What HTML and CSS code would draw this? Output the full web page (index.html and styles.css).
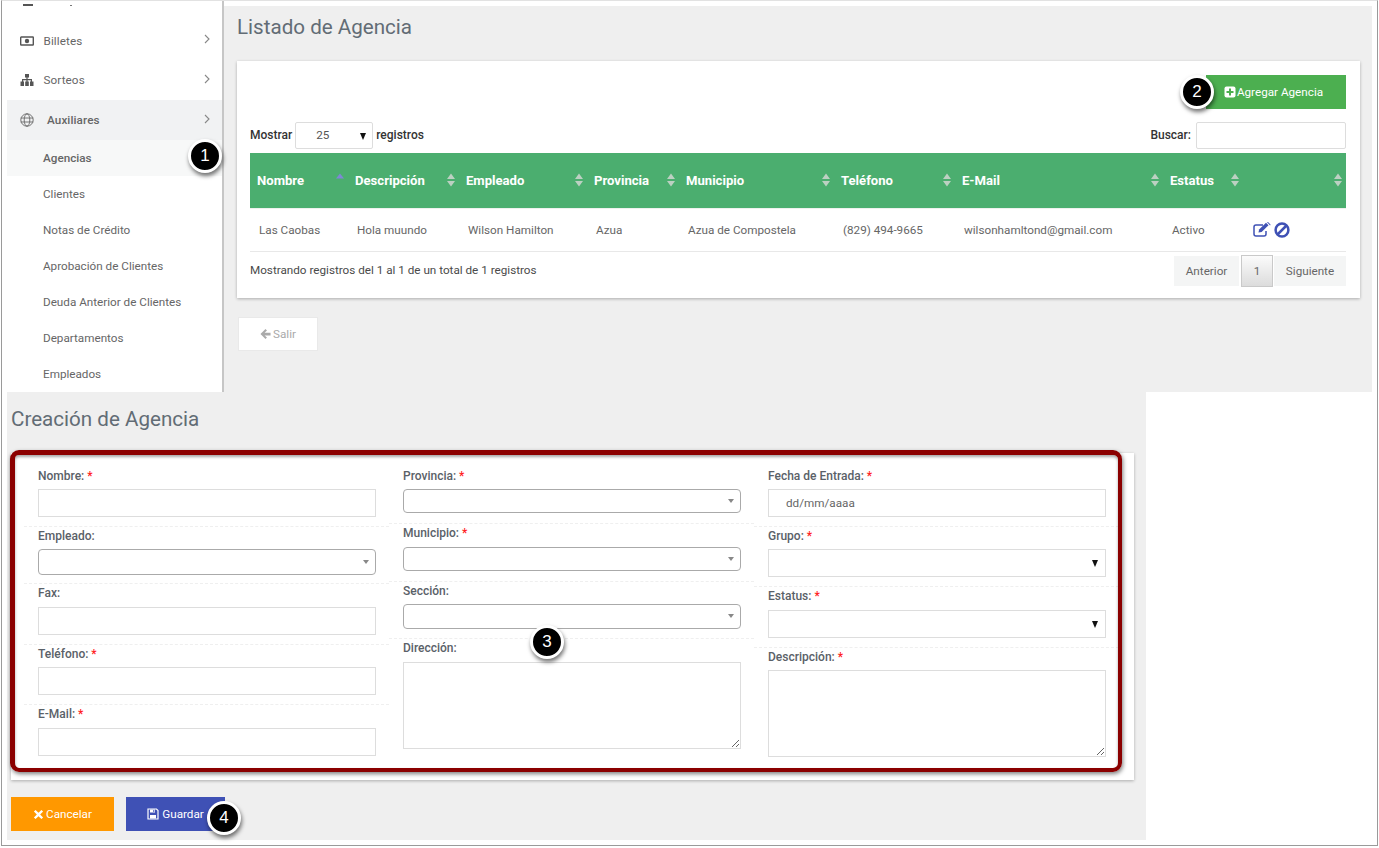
FILE: index.html
```html
<!DOCTYPE html>
<html lang="es">
<head>
<meta charset="utf-8">
<title>Agencias</title>
<link rel="stylesheet" href="styles.css">
</head>
<body>
<div class="window">
  <div class="upper">
    <aside class="sidebar">
      <div class="nav-clip"><i class="clip-a"></i><i class="clip-b"></i></div>
      <a class="nav-item">
        <svg class="nav-icon" viewBox="0 0 14 10"><rect x="0.7" y="1" width="12.6" height="8" rx="0.5" fill="none" stroke="#555" stroke-width="1.4"/><rect x="2.5" y="2.5" width="9" height="5" fill="#fff"/><circle cx="7" cy="5" r="2.2" fill="#555"/></svg>
        <span class="nav-label">Billetes</span>
        <svg class="chev" viewBox="0 0 6 10"><path d="M1 1l4 4-4 4" fill="none" stroke="#888" stroke-width="1.1"/></svg>
      </a>
      <a class="nav-item">
        <svg class="nav-icon" viewBox="0 0 14 12"><path d="M5 0h4v3.500H7.600V5H12v2.500h1.500V12h-3.500V7.500h.8V6.200H7.600V7.500H8.800V12H5.200V7.500h1.200V6.200H3.200v1.300H4V12H.5V7.500H2V5h4.400V3.500H5z" fill="#555"/></svg>
        <span class="nav-label">Sorteos</span>
        <svg class="chev" viewBox="0 0 6 10"><path d="M1 1l4 4-4 4" fill="none" stroke="#888" stroke-width="1.1"/></svg>
      </a>
      <a class="nav-item nav-open">
        <svg class="nav-globe" viewBox="0 0 14 14"><g fill="none" stroke="#666" stroke-width="0.9"><circle cx="7" cy="7" r="6.2"/><ellipse cx="7" cy="7" rx="2.8" ry="6.2"/><path d="M.8 5h12.400M.8 9h12.400"/></g></svg>
        <span class="nav-label">Auxiliares</span>
        <svg class="chev" viewBox="0 0 6 10"><path d="M1 1l4 4-4 4" fill="none" stroke="#888" stroke-width="1.1"/></svg>
      </a>
      <a class="sub-item sub-active">Agencias</a>
      <a class="sub-item">Clientes</a>
      <a class="sub-item">Notas de Crédito</a>
      <a class="sub-item">Aprobación de Clientes</a>
      <a class="sub-item">Deuda Anterior de Clientes</a>
      <a class="sub-item">Departamentos</a>
      <a class="sub-item">Empleados</a>
    </aside>
    <main class="main">
      <h1 class="title">Listado de Agencia</h1>
      <section class="list-card">
        <div class="add-row">
          <button class="btn btn-add">
            <svg class="btn-icon" viewBox="0 0 12 12"><rect width="11" height="11" x="0.500" y="0.500" rx="2" fill="#fff"/><path d="M6 2.500v7M2.500 6h7" stroke="#4caf50" stroke-width="2"/></svg>Agregar Agencia
          </button>
        </div>
        <div class="controls">
          <div class="show">
            <b>Mostrar</b>
            <div class="len-select"><span>25</span><i class="tri-black"></i></div>
            <b>registros</b>
          </div>
          <div class="search"><b>Buscar:</b><input class="search-input" type="text" aria-label="Buscar"></div>
        </div>
        <table class="grid">
          <colgroup>
            <col class="c1"><col class="c2"><col class="c3"><col class="c4"><col class="c5"><col class="c6"><col class="c7"><col class="c8"><col class="c9">
          </colgroup>
          <thead>
            <tr>
              <th><div class="th"><span>Nombre</span><svg class="sort" viewBox="0 0 8 16"><path d="M4 1.500l4 5H0z" fill="#7f87d6"/></svg></div></th>
              <th><div class="th"><span>Descripción</span><svg class="sort" viewBox="0 0 8 16"><path d="M4 1.500l4 5.500H0zM4 14.500L8 9H0z" fill="#bcd0c2"/></svg></div></th>
              <th><div class="th"><span>Empleado</span><svg class="sort" viewBox="0 0 8 16"><path d="M4 1.500l4 5.500H0zM4 14.500L8 9H0z" fill="#bcd0c2"/></svg></div></th>
              <th><div class="th"><span>Provincia</span><svg class="sort" viewBox="0 0 8 16"><path d="M4 1.500l4 5.500H0zM4 14.500L8 9H0z" fill="#bcd0c2"/></svg></div></th>
              <th><div class="th"><span>Municipio</span><svg class="sort" viewBox="0 0 8 16"><path d="M4 1.500l4 5.500H0zM4 14.500L8 9H0z" fill="#bcd0c2"/></svg></div></th>
              <th><div class="th"><span>Teléfono</span><svg class="sort" viewBox="0 0 8 16"><path d="M4 1.500l4 5.500H0zM4 14.500L8 9H0z" fill="#bcd0c2"/></svg></div></th>
              <th><div class="th"><span>E-Mail</span><svg class="sort" viewBox="0 0 8 16"><path d="M4 1.500l4 5.500H0zM4 14.500L8 9H0z" fill="#bcd0c2"/></svg></div></th>
              <th><div class="th"><span>Estatus</span><svg class="sort" viewBox="0 0 8 16"><path d="M4 1.500l4 5.500H0zM4 14.500L8 9H0z" fill="#bcd0c2"/></svg></div></th>
              <th><div class="th"><span></span><svg class="sort" viewBox="0 0 8 16"><path d="M4 1.500l4 5.500H0zM4 14.500L8 9H0z" fill="#bcd0c2"/></svg></div></th>
            </tr>
          </thead>
          <tbody>
            <tr>
              <td>Las Caobas</td>
              <td>Hola muundo</td>
              <td>Wilson Hamilton</td>
              <td>Azua</td>
              <td>Azua de Compostela</td>
              <td>(829) 494-9665</td>
              <td>wilsonhamltond@gmail.com</td>
              <td>Activo</td>
              <td class="actions"><svg class="act-edit" viewBox="0 0 18 15"><path d="M13 9v3a2 2 0 0 1-2 2H3a2 2 0 0 1-2-2V5a2 2 0 0 1 2-2h7" fill="none" stroke="#3f51b5" stroke-width="1.500"/><path d="M5.500 10.500l.6-3L13 .8l2.500 2.500L8.600 10z" fill="#3f51b5"/><path d="M14 .2l1-.2 2.500 2.400-.4 1.100z" fill="#3f51b5"/></svg><svg class="act-ban" viewBox="0 0 16 16"><circle cx="8" cy="8" r="6.400" fill="none" stroke="#3f51b5" stroke-width="2.500"/><path d="M3.500 12.500l9-9" stroke="#3f51b5" stroke-width="2.500"/></svg></td>
            </tr>
          </tbody>
        </table>
        <div class="foot">
          <span class="info">Mostrando registros del 1 al 1 de un total de 1 registros</span>
          <div class="pager">
            <a class="page page-prev">Anterior</a>
            <a class="page page-cur">1</a>
            <a class="page page-next">Siguiente</a>
          </div>
        </div>
      </section>
      <button class="btn btn-exit">
        <svg class="btn-icon-exit" viewBox="0 0 12 12"><path d="M6 .5L.5 6 6 11.500l1.600-1.600L5 7.500h6.500v-3H5l2.600-2.400z" fill="#aaa"/></svg>Salir
      </button>
    </main>
  </div>

  <section class="lower">
    <h2 class="title title-low">Creación de Agencia</h2>
    <div class="form-card">
      <div class="form-col">
        <div class="field"><label>Nombre: <em>*</em></label><input class="ctl" type="text" aria-label="Nombre"></div>
        <div class="field field-s"><label>Empleado:</label><div class="combo combo-a"><i class="tri-gray"></i></div></div>
        <div class="field"><label>Fax:</label><input class="ctl" type="text" aria-label="Fax"></div>
        <div class="field"><label>Teléfono: <em>*</em></label><input class="ctl" type="text" aria-label="Teléfono"></div>
        <div class="field field-end"><label>E-Mail: <em>*</em></label><input class="ctl" type="text" aria-label="E-Mail"></div>
      </div>
      <div class="form-col">
        <div class="field field-c"><label>Provincia: <em>*</em></label><div class="combo"><i class="tri-gray"></i></div></div>
        <div class="field field-c"><label>Municipio: <em>*</em></label><div class="combo"><i class="tri-gray"></i></div></div>
        <div class="field field-c"><label>Sección:</label><div class="combo"><i class="tri-gray"></i></div></div>
        <div class="field field-end"><label>Dirección:</label><textarea class="ctl area" aria-label="Dirección"></textarea></div>
      </div>
      <div class="form-col">
        <div class="field"><label>Fecha de Entrada: <em>*</em></label><input class="ctl ctl-date" type="text" value="dd/mm/aaaa" aria-label="Fecha de Entrada"></div>
        <div class="field"><label>Grupo: <em>*</em></label><div class="plain-select"><i class="tri-black"></i></div></div>
        <div class="field"><label>Estatus: <em>*</em></label><div class="plain-select"><i class="tri-black"></i></div></div>
        <div class="field field-end"><label>Descripción: <em>*</em></label><textarea class="ctl area" aria-label="Descripción"></textarea></div>
      </div>
      <div class="red-box"></div>
    </div>
    <div class="form-actions">
      <button class="btn btn-cancel">
        <svg class="btn-icon-x" viewBox="0 0 12 12"><path d="M2.800 1L6 4.200 9.200 1 11 2.800 7.800 6 11 9.200 9.200 11 6 7.800 2.800 11 1 9.200 4.200 6 1 2.800z" fill="#fff"/></svg>Cancelar
      </button>
      <button class="btn btn-save">
        <svg class="btn-icon-s" viewBox="0 0 12 12"><path d="M1 1h8.500L11 2.500V11H1z" fill="none" stroke="#fff" stroke-width="1.200"/><path d="M3 1.500h5v3H3zM3 7h6v3.500H3z" fill="#fff"/><path d="M6.300 2h1v2h-1z" fill="#3f51b5"/></svg>Guardar
      </button>
    </div>
  </section>

  <span class="badge b1">1</span>
  <span class="badge b2">2</span>
  <span class="badge b3">3</span>
  <span class="badge b4">4</span>
</div>
</body>
</html>
```

FILE: styles.css
```css
* { box-sizing: border-box; }
html, body { margin: 0; padding: 0; background: #fff; }
body { width: 1379px; height: 848px; overflow: hidden; font-family: Roboto, "Liberation Sans", sans-serif; font-size: 11.7px; color: #666; }

.window {
  position: relative;
  width: 1377px;
  height: 846px;
  margin-left: 1px;
  border: 1px solid #9a9a9a;
  border-top-color: #e2e2e2;
  background: #fff;
}

.upper { display: flex; height: 391px; padding-right: 5px; }

/* sidebar */
.sidebar {
  width: 222px;
  flex: none;
  padding-left: 5px;
  overflow: hidden;
  background: #fff;
  border-right: 2px solid #c6c6c6;
}
.nav-clip { height: 20px; position: relative; }
.clip-a { position: absolute; left: 16px; top: 3px; width: 10px; height: 2px; background: #555; }
.clip-b { position: absolute; left: 63px; top: 4px; width: 2px; height: 1px; background: #777; }
.nav-item { display: flex; align-items: center; height: 39.500px; padding: 0 12px 0 13px; color: #666; letter-spacing: 0.1px; }
.nav-icon { width: 14px; height: 12px; flex: none; margin-right: 9.500px; }
.nav-globe { width: 14px; height: 14px; flex: none; margin-right: 13px; }
.nav-label { flex: 1; }
.chev { width: 6px; height: 10px; flex: none; margin-top: -3px; }
.nav-open { height: 40px; background: #f1f2f3; }
.nav-open .nav-label { font-weight: 500; }
.sub-item { display: flex; align-items: center; height: 36px; padding-left: 36px; color: #666; }
.sub-active { background: #f7f8f8; font-weight: 500; }

/* main list */
.main { flex: 1; margin-top: 5px; padding: 0 12px 0 13px; background: #efefef; }
.title { margin: 0; font-size: 20.600px; font-weight: 400; color: #626c75; line-height: 24px; padding-top: 9px; }
.list-card {
  margin-top: 22px;
  height: 237px;
  padding: 14px 14px 0 13px;
  background: #fff;
  box-shadow: 0 1px 3px rgba(0,0,0,.28);
}
.add-row { display: flex; justify-content: flex-end; }
.btn { display: inline-flex; align-items: center; justify-content: center; height: 34px; border: 0; padding: 0; font-family: inherit; font-size: 11.700px; color: #fff; }
.btn-add { width: 140px; background: #4caf50; padding-right: 5px; }
.btn-icon { width: 12px; height: 12px; margin-right: 1px; }
.controls { display: flex; justify-content: space-between; align-items: center; height: 27px; margin-top: 13px; color: #333; }
.controls b { font-weight: 500; color: #333; font-size: 12px; margin-top: -1px; }
.show, .search { display: flex; align-items: center; }
.len-select { position: relative; width: 78px; height: 27px; margin: 0 3px; border: 1px solid #ddd; border-radius: 2px; color: #555; line-height: 25px; padding-left: 20px; }
.tri-black { position: absolute; right: 6px; top: 50%; margin-top: -3px; border-left: 3.500px solid transparent; border-right: 3.500px solid transparent; border-top: 7px solid #111; }
.search-input { width: 150px; height: 27px; margin-left: 5px; border: 1px solid #ddd; border-radius: 2px; background: #fff; padding: 0; }

/* table */
.grid { table-layout: fixed; width: 1096px; margin-top: 4px; border-collapse: collapse; }
.c1 { width: 98px; } .c2 { width: 111px; } .c3 { width: 128px; } .c4 { width: 92px; } .c5 { width: 155px; } .c6 { width: 121px; } .c7 { width: 208px; } .c8 { width: 80px; } .c9 { width: 103px; }
.grid th { height: 55px; padding: 0 4px 0 7px; background: #4bae6f; color: #fff; font-size: 13.100px; font-weight: 700; text-align: left; border-bottom: 1px solid #eef1ee; }
.th { display: flex; align-items: center; justify-content: space-between; }
.sort { width: 8px; height: 16px; flex: none; }
.grid td { height: 43px; padding: 0 0 0 9px; color: #666; border-bottom: 1px solid #e8e8e8; white-space: nowrap; }
.grid td.actions { padding-left: 10px; }
.actions svg { vertical-align: middle; }
.act-edit { width: 18px; height: 15px; margin-right: 3px; }
.act-ban { width: 16px; height: 16px; }

.foot { display: flex; justify-content: space-between; align-items: flex-start; padding-top: 3px; }
.info { color: #4a4a4a; margin-top: 8px; }
.pager { display: flex; align-items: center; height: 32px; gap: 1px; }
.page { display: flex; align-items: center; justify-content: center; height: 30px; background: #f4f5f5; color: #666; }
.page-prev { width: 65px; margin-right: 1px; }
.page-cur { width: 32px; height: 32px; border: 1px solid #c9c9c9; background: linear-gradient(#fbfbfb, #dcdcdc); }
.page-next { width: 72px; }

.btn-exit { display: flex; width: 80px; height: 34px; margin: 19px 0 0 1px; background: #fff; border: 1px solid #e9e9e9; color: #aaa; }
.btn-icon-exit { width: 11px; height: 12px; margin-right: 2px; }

/* lower form */
.lower { width: 1139px; height: 448px; margin: 0 0 0 5px; padding-left: 4px; background: #efefef; }
.title-low { padding-top: 15px; }
.form-card {
  position: relative;
  display: grid;
  grid-template-columns: 365px 365px 365px;
  width: 1123px;
  height: 327px;
  margin-top: 22px;
  padding: 13.600px 0 0 13px;
  background: #fff;
  box-shadow: 0 1px 3px rgba(0,0,0,.28);
}
.field { padding: 0 13px 9px 14px; border-bottom: 1px dashed #efefef; }
.field-s { padding-bottom: 8px; }
.field-c { padding-bottom: 9.700px; }
.field-end { border-bottom: 0; }
.field label { display: block; height: 22.400px; line-height: 18px; font-size: 12px; font-weight: 500; color: #5a6168; }
.field em { font-style: normal; color: #f22; }
.ctl { display: block; width: 338px; height: 28px; margin: 0; padding: 0; border: 1px solid #ddd; background: #fff; font-family: inherit; font-size: 11.700px; color: #666; }
.ctl-date { padding-left: 17px; }
.area { height: 87px; resize: both; }
.combo { position: relative; width: 338px; height: 24.500px; border: 1px solid #aaa; border-radius: 4px; background: #fff; }
.combo-a { height: 26px; }
.tri-gray { position: absolute; right: 6px; top: 50%; margin-top: -2px; border-left: 3.500px solid transparent; border-right: 3.500px solid transparent; border-top: 4px solid #888; }
.plain-select { position: relative; width: 338px; height: 28px; border: 1px solid #ddd; background: #fff; }
.plain-select .tri-black { right: 7px; }

.red-box {
  position: absolute;
  left: -1px;
  top: -3px;
  right: 12px;
  bottom: 8px;
  border-style: solid;
  border-color: #8b0000;
  border-width: 5px 4px 4px 5px;
  border-radius: 9px;
  box-shadow: 1px 2px 4px rgba(0,0,0,.5), inset 0 2px 3px rgba(0,0,0,.35);
  pointer-events: none;
}

.form-actions { display: flex; gap: 12px; margin-top: 17px; }
.btn-cancel { width: 103px; background: #ff9800; }
.btn-save { width: 99px; background: #3f51b5; }
.btn-icon-s { width: 12px; height: 12px; margin-right: 3px; }
.btn-icon-x { width: 11px; height: 11px; margin-right: 2px; }

/* numbered annotations */
.badge {
  position: absolute;
  display: flex;
  align-items: center;
  justify-content: center;
  width: 34px;
  height: 34px;
  border: 3px solid #fff;
  border-radius: 50%;
  background: #000;
  color: #fff;
  font-family: "Liberation Sans", Arial, sans-serif;
  font-size: 17px;
  box-shadow: 1px 3px 4px rgba(0,0,0,.55);
}
.b1 { left: 186px; top: 138px; }
.b2 { left: 1178px; top: 74px; }
.b3 { left: 528px; top: 624px; }
.b4 { left: 205px; top: 800px; }
```
